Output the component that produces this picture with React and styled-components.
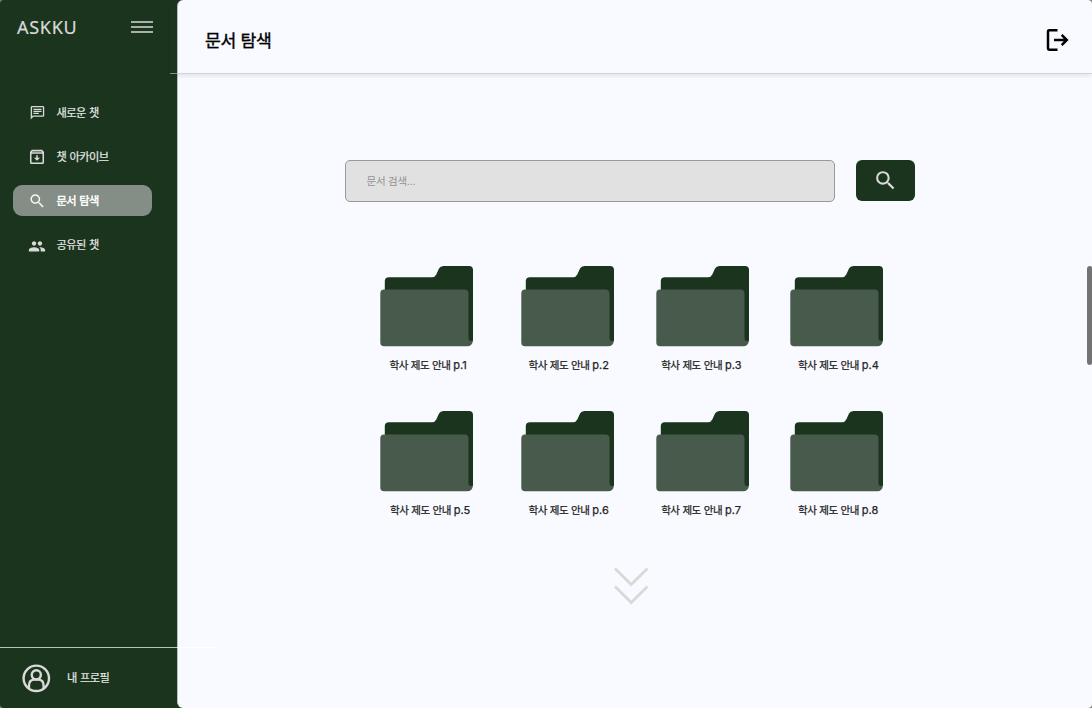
import React from "react";
import styled, { createGlobalStyle } from "styled-components";

const GlobalStyle = createGlobalStyle`
  * { box-sizing: border-box; }
  body {
    margin: 0;
    background: #7d7d7d;
    font-family: Inter, "Noto Sans CJK KR", sans-serif;
    overflow: hidden;
  }
  button { border: 0; padding: 0; background: none; font: inherit; }
`;

const Page = styled.div`
  display: flex;
  width: 1092px;
  height: 708px;
  border-radius: 4px;
  overflow: hidden;
  background: #1b341d;
`;

const Sidebar = styled.aside`
  display: flex;
  flex-direction: column;
  width: 177px;
  flex: none;
  color: #e6e8e6;
`;

const Brand = styled.div`
  display: flex;
  justify-content: space-between;
  height: 54px;
  padding: 0 24px 0 17px;
`;

const Logo = styled.span`
  margin-top: 15px;
  font: 400 18px/24px "Noto Sans", sans-serif;
  letter-spacing: 0.7px;
  color: #d9d9d9;
  -webkit-text-stroke: 0.2px #d9d9d9;
`;

const MenuButton = styled.button`
  height: 12px;
  margin-top: 21px;
  svg { display: block; }
`;

const Nav = styled.nav`
  display: flex;
  flex-direction: column;
  gap: 13px;
  padding: 43px 0 0 13px;
  flex: 1;
`;

const NavItem = styled.a`
  display: flex;
  align-items: center;
  width: 139px;
  height: 31px;
  padding-left: 15px;
  gap: 10.5px;
  border-radius: 9px;
  color: ${(p) => (p.$active ? "#ffffff" : "#e6e8e6")};
  background: ${(p) => (p.$active ? "#858e86" : "transparent")};
  svg { flex: none; fill: ${(p) => (p.$active ? "#f4f4f4" : "#d9d9d9")}; position: relative; top: 1px; }
`;

const NavLabel = styled.span`
  font-size: 11.2px;
  line-height: 20px;
  letter-spacing: -0.5px;
  word-spacing: 0.5px;
  white-space: nowrap;
  -webkit-text-stroke: ${(p) => (p.$active ? "0.45px" : "0.2px")} currentColor;
`;

const Profile = styled.div`
  position: relative;
  display: flex;
  align-items: center;
  gap: 16px;
  height: 61px;
  padding-left: 22px;
  border-top: 1px solid #b5c4b3;
  &::after {
    content: "";
    position: absolute;
    left: 177px;
    top: -1px;
    width: 40px;
    height: 1px;
    background: #ffffff;
  }
`;

const Main = styled.main`
  display: flex;
  flex-direction: column;
  flex: 1;
  min-width: 0;
  background: #f9faff;
  border-left: 1px solid #b7c0bb;
  border-radius: 6px 0 0 6px;
`;

const Header = styled.header`
  display: flex;
  align-items: center;
  justify-content: space-between;
  height: 74px;
  margin-left: -8px;
  padding: 6px 23px 0 35px;
  border-bottom: 1px solid rgba(190, 192, 194, 0.65);
  box-shadow: 0 3px 4px -1px rgba(0, 0, 0, 0.09);
`;

const Title = styled.h1`
  margin: 2px 0 0;
  font-size: 17.2px;
  line-height: 28px;
  font-weight: 400;
  letter-spacing: -0.3px;
  color: #000;
  -webkit-text-stroke: 0.4px #000;
`;

const Body = styled.div`
  display: flex;
  flex: 1;
  justify-content: space-between;
`;

const Content = styled.section`
  display: flex;
  flex-direction: column;
  width: 740px;
  padding: 86px 0 0 167px;
`;

const SearchBar = styled.div`
  display: flex;
  gap: 21px;
`;

const SearchField = styled.div`
  display: flex;
  align-items: center;
  width: 490px;
  height: 42px;
  padding: 0 0 1px 20.5px;
  border: 1px solid #98999b;
  border-radius: 5px;
  background: #e1e1e2;
  color: #929294;
  font-size: 10.5px;
  letter-spacing: -0.25px;
`;

const SearchButton = styled.button`
  display: flex;
  align-items: center;
  justify-content: center;
  width: 59px;
  height: 41px;
  border-radius: 6px;
  background: #1b341d;
`;

const FolderGrid = styled.div`
  display: grid;
  grid-template-columns: 141px 134.7px 134.3px 93px;
  grid-auto-rows: 145.3px;
  padding: 64px 0 0 35px;
`;

const Folder = styled.div`
  display: flex;
  flex-direction: column;
  svg { display: block; }
`;

const FolderName = styled.span`
  padding-left: ${(p) => p.$inset}px;
  margin-top: 8px;
  font-size: 10.5px;
  line-height: 21px;
  letter-spacing: -0.5px;
  word-spacing: 0.5px;
  white-space: nowrap;
  color: #222425;
  -webkit-text-stroke: 0.25px #222425;
`;

const PageNumber = styled.span`
  font-size: 11px;
  letter-spacing: 0;
`;

const More = styled.div`
  padding: 10px 0 0 269px;
  svg { display: block; }
`;

const ScrollThumb = styled.div`
  width: 5px;
  height: 99px;
  margin-top: 192px;
  border-radius: 3px 2px 2px 3px;
  background: #737373;
`;

const ICONS = {
  chat: "M4 4h16v12H5.17L4 17.17V4m0-2c-1.1 0-1.99.9-1.99 2L2 22l4-4h14c1.1 0 2-.9 2-2V4c0-1.1-.9-2-2-2H4zm2 10h8v2H6v-2zm0-3h12v2H6V9zm0-3h12v2H6V6z",
  archive: "M20.54 5.23l-1.39-1.68C18.88 3.21 18.47 3 18 3H6c-.47 0-.88.21-1.16.55L3.46 5.23C3.17 5.57 3 6.02 3 6.5V19c0 1.1.9 2 2 2h14c1.1 0 2-.9 2-2V6.5c0-.48-.17-.93-.46-1.27zM6.24 5h11.52l.83 1H5.42l.82-1zM5 19V8h14v11H5zm8-9h-2v3H8l4 4 4-4h-3z",
  search: "M15.5 14h-.79l-.28-.27A6.47 6.47 0 0 0 16 9.5 6.5 6.5 0 1 0 9.5 16c1.61 0 3.09-.59 4.23-1.57l.27.28v.79l5 4.99L20.49 19l-4.99-5zm-6 0C7.01 14 5 11.99 5 9.5S7.01 5 9.5 5 14 7.01 14 9.5 11.99 14 9.5 14z",
  people: "M16 11c1.66 0 2.99-1.34 2.99-3S17.66 5 16 5s-3 1.34-3 3 1.34 3 3 3zm-8 0c1.66 0 2.99-1.34 2.99-3S9.66 5 8 5 5 6.34 5 8s1.34 3 3 3zm0 2c-2.33 0-7 1.17-7 3.5V19h14v-2.5c0-2.33-4.67-3.5-7-3.5zm8 0c-.29 0-.62.02-.97.05 1.16.84 1.97 1.97 1.97 3.45V19h6v-2.5c0-2.33-4.67-3.5-7-3.5z",
};

const NAV = [
  { icon: "chat", box: "-2 0.6 26.6 26.6", label: "새로운 챗" },
  { icon: "archive", box: "0.5 1.9 23 23", label: "챗 아카이브" },
  { icon: "search", box: "-0.2 1.4 23.9 23.9", label: "문서 탐색", active: true },
  { icon: "people", box: "-0.2 -0.8 24.4 24.4", label: "공유된 챗" },
];

const FOLDERS = [
  { page: 1, inset: 9.5 },
  { page: 2, inset: 7.5 },
  { page: 3, inset: 5.5 },
  { page: 4, inset: 8 },
  { page: 5, inset: 10 },
  { page: 6, inset: 7.5 },
  { page: 7, inset: 5.5 },
  { page: 8, inset: 8 },
];

const FolderIcon = () => (
  <svg width="93" height="81" viewBox="0 0 93 81">
    <path d="M4.800 28V15Q4.800 11.200 9 11.200H52Q55 11.200 56.300 8.500L59 2.500Q60.300 0 63.500 0H89Q93 0 93 4V75L88 77L60 60Z" fill="#1b341d" />
    <path d="M4 23.400H84.500Q88.500 23.400 88.500 27.400V72.500Q88.800 75 90.800 75Q92.500 75 93 74Q92.500 80.300 87 80.300H4Q0.300 80.300 0.300 76.500V27.400Q0.300 23.400 4 23.400Z" fill="#485a4b" />
  </svg>
);

export default function App() {
  return (
    <>
      <GlobalStyle />
      <Page>
        <Sidebar>
          <Brand>
            <Logo>ASKKU</Logo>
            <MenuButton aria-label="메뉴">
              <svg width="22" height="12" viewBox="0 0 22 12" stroke="#d9d9d9" strokeWidth="1.3">
                <path d="M0 1H22M0 6H22M0 11H22" />
              </svg>
            </MenuButton>
          </Brand>
          <Nav>
            {NAV.map((n) => (
              <NavItem key={n.icon} $active={n.active}>
                <svg width="18" height="18" viewBox={n.box}><path d={ICONS[n.icon]} /></svg>
                <NavLabel $active={n.active}>{n.label}</NavLabel>
              </NavItem>
            ))}
          </Nav>
          <Profile>
            <svg width="29" height="29" viewBox="0 0 29 29" fill="none" stroke="#d9d9d9" strokeWidth="2.4">
              <circle cx="14.300" cy="14.300" r="12.700" />
              <circle cx="14.300" cy="10.800" r="4.600" />
              <path d="M7 24.200V21.500Q7 15.600 12.500 15.600H16.100Q21.600 15.600 21.600 21.500V24.200" />
            </svg>
            <NavLabel>내 프로필</NavLabel>
          </Profile>
        </Sidebar>
        <Main>
          <Header>
            <Title>문서 탐색</Title>
            <svg width="24" height="24" viewBox="0 0 24 24" fill="none" stroke="#000" strokeWidth="2.500">
              <path d="M12.500 2.300H4.200Q3 2.300 3 3.500V20.500Q3 21.700 4.200 21.700H12.500M9 12H22M16.700 6.900L21.800 12L16.700 17.100" />
            </svg>
          </Header>
          <Body>
            <Content>
              <SearchBar>
                <SearchField>문서 검색...</SearchField>
                <SearchButton aria-label="검색">
                  <svg width="25" height="25" viewBox="0 0 24 24" fill="#d9d9d9"><path d={ICONS.search} /></svg>
                </SearchButton>
              </SearchBar>
              <FolderGrid>
                {FOLDERS.map((f) => (
                  <Folder key={f.page}>
                    <FolderIcon />
                    <FolderName $inset={f.inset}>학사 제도 안내 <PageNumber>p.{f.page}</PageNumber></FolderName>
                  </Folder>
                ))}
              </FolderGrid>
              <More>
                <svg width="36" height="38" viewBox="0 0 36 38" fill="none" stroke="#d9d9d9" strokeWidth="2.900">
                  <path d="M1 1.500L17.200 17.500L33.500 1.500M1 19.500L17.200 35.500L33.500 19.500" />
                </svg>
              </More>
            </Content>
            <ScrollThumb />
          </Body>
        </Main>
      </Page>
    </>
  );
}
